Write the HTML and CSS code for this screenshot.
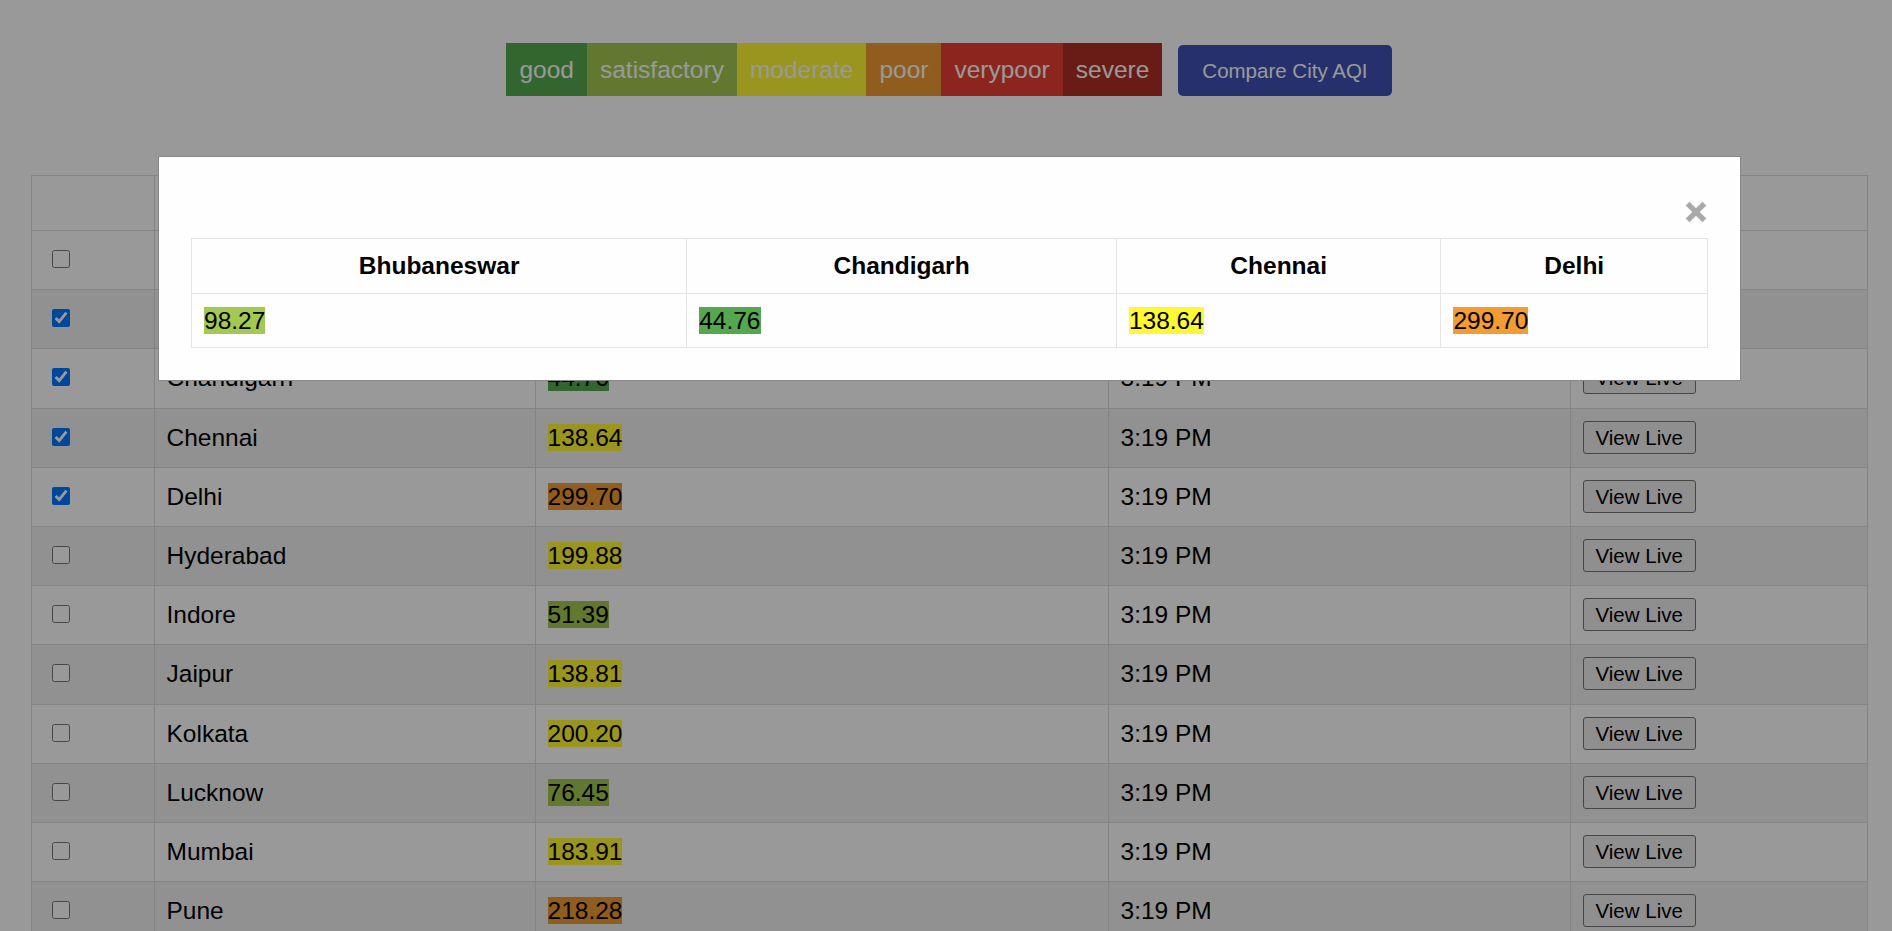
FILE: index.html
```html
<!DOCTYPE html>
<html lang="en">
<head>
<meta charset="utf-8">
<title>City AQI</title>
<link rel="stylesheet" href="styles.css">
</head>
<body>
  <header class="topbar">
    <div class="legend">
      <span class="lg good">good</span>
      <span class="lg satisfactory">satisfactory</span>
      <span class="lg moderate">moderate</span>
      <span class="lg poor">poor</span>
      <span class="lg verypoor">verypoor</span>
      <span class="lg severe">severe</span>
    </div>
    <button class="compare-btn" type="button">Compare City AQI</button>
  </header>

  <table class="city-table">
    <colgroup>
      <col class="c-select"><col class="c-city"><col class="c-aqi"><col class="c-time"><col class="c-live">
    </colgroup>
    <thead>
      <tr><th></th><th></th><th></th><th></th><th></th></tr>
    </thead>
    <tbody>
      <tr><td><input type="checkbox"></td><td>Ahmedabad</td><td><span class="aqi moderate">112.40</span></td><td>3:19 PM</td><td><button class="live-btn" type="button">View Live</button></td></tr>
      <tr><td><input type="checkbox" checked></td><td>Bhubaneswar</td><td><span class="aqi satisfactory">98.27</span></td><td>3:19 PM</td><td><button class="live-btn" type="button">View Live</button></td></tr>
      <tr><td><input type="checkbox" checked></td><td>Chandigarh</td><td><span class="aqi good">44.76</span></td><td>3:19 PM</td><td><button class="live-btn" type="button">View Live</button></td></tr>
      <tr><td><input type="checkbox" checked></td><td>Chennai</td><td><span class="aqi moderate">138.64</span></td><td>3:19 PM</td><td><button class="live-btn" type="button">View Live</button></td></tr>
      <tr><td><input type="checkbox" checked></td><td>Delhi</td><td><span class="aqi poor">299.70</span></td><td>3:19 PM</td><td><button class="live-btn" type="button">View Live</button></td></tr>
      <tr><td><input type="checkbox"></td><td>Hyderabad</td><td><span class="aqi moderate">199.88</span></td><td>3:19 PM</td><td><button class="live-btn" type="button">View Live</button></td></tr>
      <tr><td><input type="checkbox"></td><td>Indore</td><td><span class="aqi satisfactory">51.39</span></td><td>3:19 PM</td><td><button class="live-btn" type="button">View Live</button></td></tr>
      <tr><td><input type="checkbox"></td><td>Jaipur</td><td><span class="aqi moderate">138.81</span></td><td>3:19 PM</td><td><button class="live-btn" type="button">View Live</button></td></tr>
      <tr><td><input type="checkbox"></td><td>Kolkata</td><td><span class="aqi moderate">200.20</span></td><td>3:19 PM</td><td><button class="live-btn" type="button">View Live</button></td></tr>
      <tr><td><input type="checkbox"></td><td>Lucknow</td><td><span class="aqi satisfactory">76.45</span></td><td>3:19 PM</td><td><button class="live-btn" type="button">View Live</button></td></tr>
      <tr><td><input type="checkbox"></td><td>Mumbai</td><td><span class="aqi moderate">183.91</span></td><td>3:19 PM</td><td><button class="live-btn" type="button">View Live</button></td></tr>
      <tr><td><input type="checkbox"></td><td>Pune</td><td><span class="aqi poor">218.28</span></td><td>3:19 PM</td><td><button class="live-btn" type="button">View Live</button></td></tr>
    </tbody>
  </table>

  <div class="overlay">
    <div class="modal">
      <div class="modal-top">
        <svg class="close" viewBox="0 0 22 22" width="22" height="22" aria-label="close">
          <line x1="2.6" y1="2.6" x2="19.4" y2="19.4"/>
          <line x1="19.4" y1="2.6" x2="2.6" y2="19.4"/>
        </svg>
      </div>
      <table class="compare-table">
        <thead>
          <tr><th>Bhubaneswar</th><th>Chandigarh</th><th>Chennai</th><th>Delhi</th></tr>
        </thead>
        <tbody>
          <tr>
            <td><span class="aqi satisfactory">98.27</span></td>
            <td><span class="aqi good">44.76</span></td>
            <td><span class="aqi moderate">138.64</span></td>
            <td><span class="aqi poor">299.70</span></td>
          </tr>
        </tbody>
      </table>
    </div>
  </div>
</body>
</html>
```

FILE: styles.css
```css
html, body {
  margin: 0;
  padding: 0;
  background: #ffffff;
  overflow: hidden;
}

body {
  font-family: "Liberation Sans", Arial, sans-serif;
  color: #000;
  font-size: 24.5px;
}

.topbar {
  display: flex;
  justify-content: center;
  align-items: baseline;
  gap: 16px;
  padding: 43px 0 0 6px;
}

.legend {
  display: flex;
}

.lg {
  display: block;
  padding: 12.5px 13px;
  line-height: 28px;
  font-size: 24.5px;
  color: #ffffff;
}

.lg.good { background: #55a84f; }
.lg.satisfactory { background: #a3c853; }
.lg.moderate { background: #fff833; }
.lg.poor { background: #f29c33; }
.lg.verypoor { background: #e93f33; }
.lg.severe { background: #af2d24; }

.compare-btn {
  font-family: "Liberation Sans", Arial, sans-serif;
  font-size: 20.5px;
  line-height: 23px;
  padding: 14px 24px;
  border: 0;
  border-radius: 5px;
  background: #3f51b5;
  color: #ffffff;
}

.city-table {
  margin: 79px 0 0 31px;
  width: 1836px;
  border-collapse: collapse;
  table-layout: fixed;
}

.c-select { width: 122.5px; }
.c-city { width: 381px; }
.c-aqi { width: 573px; }
.c-time { width: 462px; }
.c-live { width: 297.5px; }

.city-table th,
.city-table td {
  border: 1px solid #dddddd;
  padding: 12px;
  text-align: left;
}

.city-table th {
  height: 30px;
  line-height: 30px;
  font-weight: bold;
}

.city-table td {
  line-height: 34.2px;
  white-space: nowrap;
}

.city-table tbody tr:nth-child(even) {
  background: #f2f2f2;
}

.city-table input[type="checkbox"] {
  width: 18px;
  height: 18px;
  margin: 7px 0 0 8px;
  vertical-align: top;
}

.aqi.good { background: #55a84f; }
.aqi.satisfactory { background: #a3c853; }
.aqi.moderate { background: #fff833; }
.aqi.poor { background: #f29c33; }
.aqi.verypoor { background: #e93f33; }
.aqi.severe { background: #af2d24; }

.live-btn {
  font-family: "Liberation Sans", Arial, sans-serif;
  font-size: 20.5px;
  line-height: 23px;
  padding: 4px 12px;
  background: #efefef;
  color: #000;
  border: 1px solid #767676;
  border-radius: 3px;
  vertical-align: top;
}

.overlay {
  position: fixed;
  inset: 0;
  background: rgba(0, 0, 0, 0.4);
  z-index: 10;
}

.modal {
  position: absolute;
  left: 158px;
  top: 156px;
  width: 1583px;
  box-sizing: border-box;
  background: #fefefe;
  border: 1px solid #888888;
  padding: 32px 32px 32px;
}

.modal-top {
  display: flex;
  justify-content: flex-end;
  align-items: flex-start;
  height: 49px;
}

.close {
  margin: 12px 1px 0 0;
  stroke: #aaaaaa;
  stroke-width: 5.4;
  fill: none;
}

.compare-table {
  width: 100%;
  border-collapse: collapse;
}

.compare-table th,
.compare-table td {
  border: 1px solid #e5e5e5;
  padding: 12.5px 12px;
  line-height: 28px;
}

.compare-table th {
  text-align: center;
  font-weight: bold;
  padding: 13px 12px;
}

.compare-table td {
  text-align: left;
}
```
